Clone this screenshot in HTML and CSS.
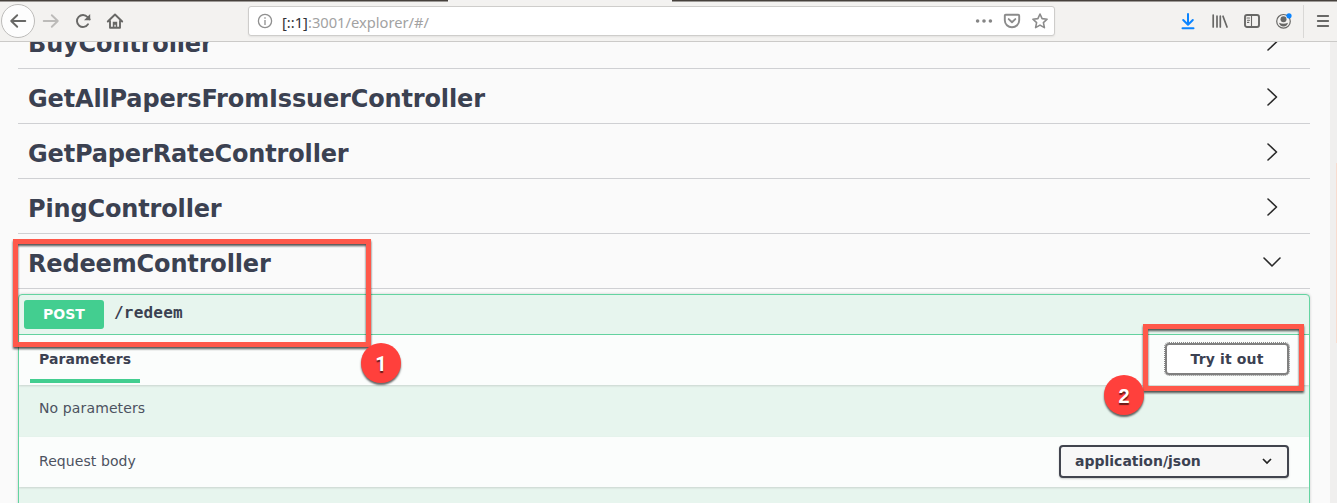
FILE: index.html
```html
<!DOCTYPE html>
<html lang="en">
<head>
<meta charset="utf-8">
<title>API Explorer</title>
<link rel="stylesheet" href="styles.css">
</head>
<body>
<div class="window">
  <header class="toolbar">
    <nav class="nav">
      <button class="back" aria-label="Back"><svg viewBox="0 0 16 16" class="icon"><path d="M15.3 8H1.2M7.2 2.2L1.2 8l6 5.8"/></svg></button>
      <svg viewBox="0 0 16 16" class="icon faded"><path d="M.7 8h14.1M8.800 2.200L14.800 8l-6 5.800"/></svg>
      <svg viewBox="0 0 16 16" class="icon"><path d="M13 11.2A6 6 0 1 1 12.5 4L14.7 6.3"/><path class="fill" d="M15.2 1v6.2H9z"/></svg>
      <svg viewBox="0 0 16 16" class="icon"><path d="M.8 8.500L8 1.500l7.200 7M3 8v6.800h10V8"/><path class="fill" d="M5.800 15V8.800h4.400V15H8.700v-3.300H7.400V15z"/></svg>
    </nav>
    <div class="address">
      <svg viewBox="0 0 16 16" class="info"><circle cx="8" cy="8" r="6.6"/><path d="M8 7v5M8 4.200v1.600"/></svg>
      <span class="url"><b>[::1]</b>:3001/explorer/#/</span>
      <svg viewBox="0 0 18 16" class="dots"><circle cx="2.6" cy="8" r="1.8"/><circle cx="9" cy="8" r="1.8"/><circle cx="15.4" cy="8" r="1.8"/></svg>
      <svg viewBox="0 0 16 16" class="icon soft pocket"><path d="M1.800 1.700h12.400q1 0 1 1v4.600a7.200 7 0 0 1-14.400 0V2.700q0-1 1-1z"/><path d="M4.700 6.100L8 9.300l3.300-3.200"/></svg>
      <svg viewBox="0 0 16 16" class="icon soft star"><path d="M8 1l2.100 4.600 5 .6-3.700 3.400 1 5L8 12.100l-4.400 2.500 1-5L.9 6.200l5-.6z"/></svg>
    </div>
    <div class="tools">
      <svg viewBox="0 0 16 18" class="icon download"><path d="M8 2v10.500M3.200 8L8 12.700 12.800 8M2.500 16.300h11"/></svg>
      <svg viewBox="0 0 16 16" class="icon library"><path d="M1.200 2v12M5 3.200V14M8.300 3.200V14M11 3.200L15 14"/></svg>
      <svg viewBox="0 0 16 16" class="icon"><rect x="1" y="2" width="14" height="12" rx="2"/><path class="thin" d="M7.500 2v12M3 5h2.500M3.500 7.200h2M3.500 9.400h1.300"/></svg>
      <svg viewBox="0 0 16 16" class="icon account"><circle cx="7.5" cy="8.3" r="6.8"/><circle class="fill" cx="7.5" cy="6.3" r="3"/><path class="fill" d="M3 9.800q4.500 2 9 0-.8 3.700-4.500 3.700T3 9.800z"/><circle class="dot" cx="13" cy="2.8" r="2.6"/></svg>
      <span class="divider"></span>
      <svg viewBox="0 0 16 16" class="icon menu"><path d="M2.800 3h10.400M2.800 8h10.400M2.800 13h10.400"/></svg>
    </div>
  </header>

  <div class="viewport">
    <main class="page">
      <section class="tag first"><h2>BuyController</h2><svg class="arrow" viewBox="0 0 20 20"><path d="M6 2l8.500 8L6 18"/></svg></section>
      <section class="tag"><h2>GetAllPapersFromIssuerController</h2><svg class="arrow" viewBox="0 0 20 20"><path d="M6 2l8.500 8L6 18"/></svg></section>
      <section class="tag"><h2>GetPaperRateController</h2><svg class="arrow" viewBox="0 0 20 20"><path d="M6 2l8.500 8L6 18"/></svg></section>
      <section class="tag"><h2>PingController</h2><svg class="arrow" viewBox="0 0 20 20"><path d="M6 2l8.500 8L6 18"/></svg></section>
      <section class="tag"><h2>RedeemController</h2><svg class="arrow" viewBox="0 0 20 20"><path d="M2 6l8 8 8-8"/></svg></section>
      <article class="operation">
        <div class="summary"><span class="method">POST</span><span class="path">/redeem</span></div>
        <div class="bar params"><h4 class="tab">Parameters</h4><button class="try">Try it out</button></div>
        <div class="empty">No parameters</div>
        <div class="bar body"><span class="label">Request body</span>
          <div class="select"><span>application/json</span><svg viewBox="0 0 12 12"><path d="M2 4l4 4 4-4"/></svg></div>
        </div>
      </article>
    </main>
    <aside class="scrollbar"><span class="edge"></span></aside>
  </div>

  <div class="callout one"></div>
  <div class="callout two"></div>
  <span class="badge badge-one">1</span>
  <span class="badge badge-two">2</span>
</div>
</body>
</html>
```

FILE: styles.css
```css
* { box-sizing: border-box; }
body { margin: 0; background: #fafafa; color: #3b4151; font-family: "DejaVu Sans", sans-serif; }
h2, h4 { margin: 0; }
button { font: inherit; color: inherit; padding: 0; }
.window { position: relative; display: flex; flex-direction: column; width: 1337px; height: 503px; overflow: hidden; }

.toolbar { display: flex; flex: 0 0 42px; align-items: center; background: linear-gradient(90deg, #46413c 448px, #f3f2f1 448px 672px, #46413c 672px) top / 100% 1.5px no-repeat #f3f2f0; border-bottom: 1px solid #cbcac8; padding-top: 1px; }
.nav { display: flex; align-items: center; gap: 16px; width: 248px; padding-left: 1px; }
.back { display: grid; place-items: center; width: 34px; height: 34px; border: 1px solid #bdbcba; border-radius: 50%; background: #fdfdfd; margin-right: -8px; }
.icon { width: 16px; height: 16px; fill: none; stroke: #686866; stroke-width: 1.9; stroke-linecap: round; stroke-linejoin: round; overflow: visible; }
.icon .fill { fill: #686866; stroke: none; }
.icon .thin { stroke-width: 1.1; }
.faded { stroke: #bcbbb9; }
.soft { stroke: #8b8b8b; }
.address { display: flex; align-items: center; width: 807px; height: 30px; background: #fff; border: 1px solid #cecdcb; border-radius: 3px; box-shadow: 0 1px 2px #0001; padding: 0 6px 0 8px; }
.info { width: 16px; height: 16px; fill: none; stroke: #8f8f8f; stroke-width: 1.3; }
.url { flex: 1; margin-left: 9px; font: 14.7px/20px "Noto Sans", sans-serif; color: #a2a2a2; padding-top: 1px; }
.url b { font-weight: 400; color: #303036; }
.dots { width: 18px; height: 16px; fill: #858585; }
.pocket { margin-left: 11px; }
.star { margin-left: 12px; stroke-width: 1.6; }
.tools { display: flex; flex: 1; align-items: center; gap: 16px; padding-left: 125px; }
.download { height: 18px; stroke: #0a84ff; stroke-width: 2; }
.library { stroke-width: 1.7; }
.account { stroke-width: 1.2; }
.account .dot { fill: #0a84ff; stroke: none; }
.divider { width: 1px; height: 33px; background: #d9d8d6; margin: 0 -5px 0 -5px; }
.menu { margin-left: 0; }

.viewport { display: flex; flex: 1; min-height: 0; overflow: hidden; }
.page { flex: 1; padding: 0 20px 0 18px; overflow: hidden; }
.scrollbar { width: 7px; background: #f0efee; display: flex; justify-content: flex-end; padding-top: 121px; }
.edge { width: 1px; height: 180px; background: #f8dccf; }
.tag { display: flex; align-items: center; justify-content: space-between; height: 55px; padding: 1px 28px 0 10px; border-bottom: 1px solid #cfd0d3; }
.tag.first { margin-top: -28px; }
.tag h2 { padding-top: 5px; font-size: 24px; line-height: 28px; letter-spacing: -.15px; }
.arrow { width: 20px; height: 20px; fill: none; stroke: #292929; stroke-width: 1.6; stroke-linecap: round; stroke-linejoin: round; }

.operation { height: 300px; margin-top: 5px; border: 1px solid #64d4a1; border-radius: 4px; background: #e7f5ee; box-shadow: 0 0 3px #0003; overflow: hidden; }
.summary { display: flex; align-items: center; height: 40px; padding: 0 5px; border-bottom: 1px solid #64d4a1; }
.method { width: 80px; height: 29px; border-radius: 3px; background: #43ce90; color: #fff; font-size: 14px; font-weight: 700; line-height: 29px; text-align: center; }
.path { margin-left: 10px; padding-bottom: 3px; font: 700 16px/20px "DejaVu Sans Mono", monospace; letter-spacing: .2px; }
.bar { display: flex; align-items: center; justify-content: space-between; height: 50px; padding: 0 20px; background: #fbfdfc; box-shadow: 0 1px 2px #0002; font-size: 14px; }
.params { height: 50px; padding-left: 11px; }
.tab { align-self: stretch; width: 110px; height: 48px; padding: 14px 0 0 9px; border-bottom: 4px solid #43ce90; font-size: 14px; line-height: 20px; letter-spacing: .1px; }
.try { width: 124px; height: 32px; margin-bottom: 3px; border: 2px solid #808080; border-radius: 4px; outline: 1px dotted #888; outline-offset: 0; background: #fff; font-size: 14px; font-weight: 700; letter-spacing: .15px; }
.empty { height: 52px; padding: 13px 20px; font-size: 14px; line-height: 20px; letter-spacing: .12px; color: #4c525f; }
.label { letter-spacing: .08px; color: #4c525f; }
.body { padding-bottom: 2px; }
.select { display: flex; align-items: center; justify-content: space-between; width: 230px; height: 33px; padding: 0 14px; border: 2px solid #41444e; border-radius: 4px; background: #f7f7f7; box-shadow: 0 1px 2px #0003; font-weight: 700; }
.select svg { width: 12px; height: 12px; fill: none; stroke: #222; stroke-width: 1.7; }

.callout { position: absolute; border: 5px solid #ff584a; filter: drop-shadow(0 2px 1px #000a); }
.one { left: 13px; top: 239px; width: 358px; height: 108px; }
.two { left: 1143px; top: 324px; width: 161px; height: 67px; }
.badge { position: absolute; width: 40px; height: 40px; border-radius: 50%; background: #ff403c; color: #fff; font: 700 20px/42px "Liberation Sans", sans-serif; text-align: center; text-shadow: 0 2px 1px #0009; box-shadow: 0 2px 2px #0009; }
.badge-one { left: 361px; top: 343px; font-family: Roboto, sans-serif; }
.badge-two { left: 1104px; top: 375px; }
```
